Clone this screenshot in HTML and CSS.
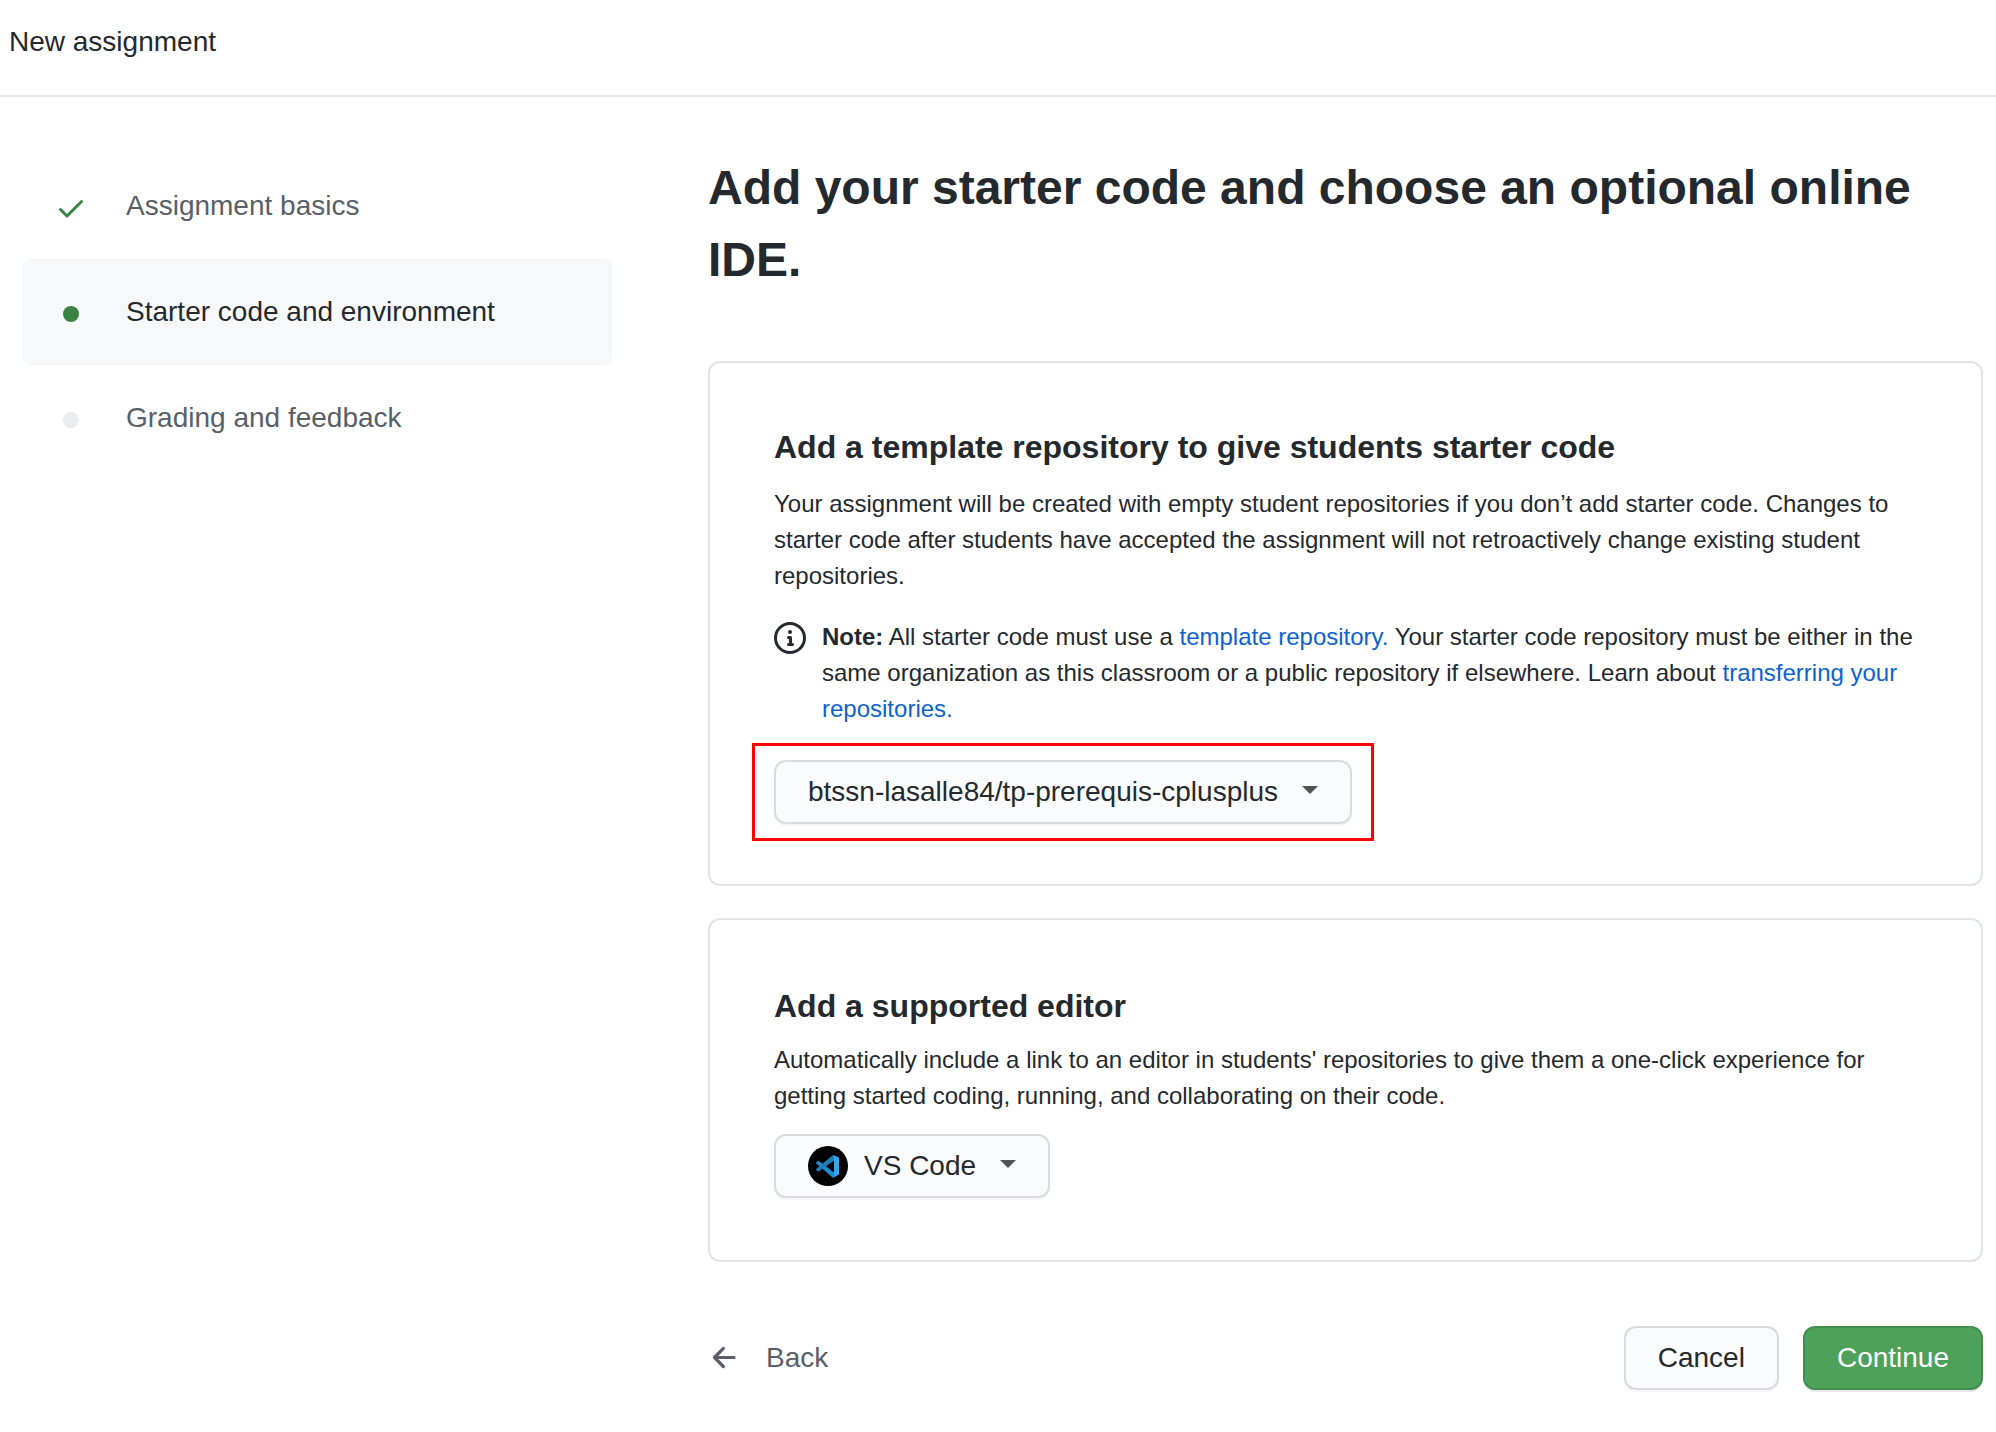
FILE: index.html
```html
<!DOCTYPE html>
<html lang="en">
<head>
<meta charset="utf-8">
<title>New assignment</title>
<meta name="viewport" content="width=device-width, initial-scale=1">
<link rel="stylesheet" href="styles.css">
</head>
<body>
<header class="topbar">New assignment</header>
<div class="layout">
  <nav class="steps" aria-label="Assignment steps">
    <a class="step" href="#basics">
      <span class="step-icon"><svg class="icon check" viewBox="0 0 16 16" aria-hidden="true"><path d="M13.78 4.22a.75.75 0 010 1.06l-7.25 7.25a.75.75 0 01-1.06 0L2.22 9.28a.75.75 0 011.06-1.06L6 10.94l6.72-6.72a.75.75 0 011.06 0z"/></svg></span>
      <span>Assignment basics</span>
    </a>
    <a class="step step-current" href="#starter-code" aria-current="step">
      <span class="step-icon"><span class="dot dot-current"></span></span>
      <span>Starter code and environment</span>
    </a>
    <a class="step" href="#grading">
      <span class="step-icon"><span class="dot"></span></span>
      <span>Grading and feedback</span>
    </a>
  </nav>
  <main class="content">
    <h1 class="title">Add your starter code and choose an optional online IDE.</h1>
    <section class="card">
      <h2 class="card-title">Add a template repository to give students starter code</h2>
      <p class="text">Your assignment will be created with empty student repositories if you don’t add starter code. Changes to starter code after students have accepted the assignment will not retroactively change existing student repositories.</p>
      <div class="note">
        <svg class="icon note-icon" viewBox="0 0 16 16" aria-hidden="true"><path fill-rule="evenodd" d="M8 1.5a6.5 6.5 0 100 13 6.5 6.5 0 000-13zM0 8a8 8 0 1116 0A8 8 0 010 8zm6.5-.25A.75.75 0 017.25 7h1a.75.75 0 01.75.75v2.75h.25a.75.75 0 010 1.5h-2a.75.75 0 010-1.5h.25v-2h-.25a.75.75 0 01-.75-.75zM8 6a1 1 0 100-2 1 1 0 000 2z"/></svg>
        <p class="text"><strong>Note:</strong> All starter code must use a <a class="link" href="#template">template repository.</a> Your starter code repository must be either in the same organization as this classroom or a public repository if elsewhere. Learn about <a class="link" href="#transfer">transferring your repositories.</a></p>
      </div>
      <div class="picker highlighted">
        <button class="btn" type="button" aria-haspopup="menu">btssn-lasalle84/tp-prerequis-cplusplus<span class="caret"></span></button>
      </div>
    </section>
    <section class="card card-editor">
      <h2 class="card-title">Add a supported editor</h2>
      <p class="text">Automatically include a link to an editor in students' repositories to give them a one-click experience for getting started coding, running, and collaborating on their code.</p>
      <div class="picker">
        <button class="btn" type="button" aria-haspopup="menu"><svg class="editor-logo" viewBox="0 0 40 40" aria-hidden="true"><circle cx="20" cy="20" r="20"/><path fill="#2489ca" d="M8.300 16.200l1.500-1.300q.6-.4 1.200 0L26 26.500v5.500q-1 0-2-1L8.300 17.500q-.7-.6 0-1.300z"/><path fill="#1f7fbd" d="M8.300 24l1.500 1.300q.6.400 1.200 0L26 14.500V9q-1 0-2 1L8.300 22.700q-.7.600 0 1.300z"/><path fill="#34a5f0" d="M25 9l5 2q1 .5 1 1.500v15q0 1-1 1.500l-5 3q1-.5 1-2V11q0-1.500-1-2z"/></svg><span>VS Code</span><span class="caret"></span></button>
      </div>
    </section>
    <footer class="actions">
      <a class="back" href="#back"><svg class="icon back-icon" viewBox="0 0 16 16" aria-hidden="true"><path d="M7.780 12.530a.75.75 0 01-1.060 0L2.470 8.280a.75.75 0 010-1.060l4.250-4.250a.75.75 0 011.060 1.060L4.810 7h7.440a.75.75 0 010 1.500H4.810l2.970 2.970a.75.75 0 010 1.060z"/></svg>Back</a>
      <button class="btn" type="button">Cancel</button>
      <button class="btn btn-primary" type="submit">Continue</button>
    </footer>
  </main>
</div>
</body>
</html>
```

FILE: styles.css
```css
* {
  box-sizing: border-box;
}

body {
  margin: 0;
  background: #fff;
  color: #24292e;
  font-family: "Liberation Sans", Arial, Helvetica, sans-serif;
  font-size: 28px;
  line-height: 42px;
}

h1, h2, p {
  margin: 0;
}

a {
  text-decoration: none;
}

.icon {
  width: 32px;
  height: 32px;
  flex: none;
  fill: currentColor;
}

.topbar {
  padding: 21px 9px 32px;
  border-bottom: 2px solid #e1e4e8;
}

.layout {
  display: grid;
  grid-template-columns: minmax(0, 589fr) minmax(0, 1275fr);
  gap: 96px;
  padding: 55px 13px 40px 23px;
}

.steps {
  display: flex;
  flex-direction: column;
  padding-top: 1px;
}

.step {
  display: flex;
  align-items: center;
  gap: 39px;
  padding: 32px;
  border-radius: 8px;
  color: #586069;
}

.step-current {
  background: #f6f8fa;
  color: #24292e;
}

.step-icon {
  display: flex;
  justify-content: center;
  width: 32px;
  padding-top: 4px;
}

.check {
  color: #3a8443;
}

.dot {
  width: 16px;
  height: 16px;
  border-radius: 50%;
  background: #eaecef;
}

.dot-current {
  background: #3a8443;
}

.content {
  display: flex;
  flex-direction: column;
  gap: 32px;
}

.title {
  margin-bottom: 33px;
  font-size: 48px;
  line-height: 72px;
}

.card {
  padding: 64px 64px 60px;
  border: 2px solid #e1e4e8;
  border-radius: 12px;
}

.card-title {
  margin-bottom: 19px;
  font-size: 32px;
  line-height: 40px;
}

.card-editor {
  padding: 66px 64px 62px;
}

.card-editor .card-title {
  margin-bottom: 16px;
}

.text {
  font-size: 24px;
  line-height: 36px;
}

.note {
  display: flex;
  gap: 16px;
  margin-top: 25px;
}

.note-icon {
  margin-top: 3px;
}

.link {
  color: #0b63d1;
}

.picker {
  display: flex;
  position: relative;
  width: fit-content;
  margin-top: 20px;
}

.note + .picker {
  margin-top: 33px;
}

.highlighted::after {
  content: "";
  position: absolute;
  inset: -17px -22px;
  border: 3px solid #f00;
  pointer-events: none;
}

.btn {
  display: flex;
  align-items: center;
  gap: 16px;
  height: 64px;
  padding: 0 32px;
  border: 2px solid #d9dbde;
  border-radius: 12px;
  background: #fafbfc;
  box-shadow: 0 2px 0 rgba(27, 31, 35, 0.04);
  color: #24292e;
  font: inherit;
}

.btn-primary {
  border-color: #438d4f;
  background: #4ea15a;
  box-shadow: 0 2px 0 rgba(27, 31, 35, 0.1);
  color: #fff;
}

.caret {
  margin: 0 0 4px 8px;
  border: 8px solid transparent;
  border-top-color: #4f5358;
  border-bottom: 0;
}

.editor-logo {
  width: 40px;
  height: 40px;
}

.actions {
  display: flex;
  align-items: center;
  gap: 24px;
  margin-top: 32px;
}

.back {
  display: flex;
  align-items: center;
  gap: 24px;
  margin-right: auto;
  color: #586069;
}

.back-icon {
  width: 34px;
  height: 34px;
}
```
